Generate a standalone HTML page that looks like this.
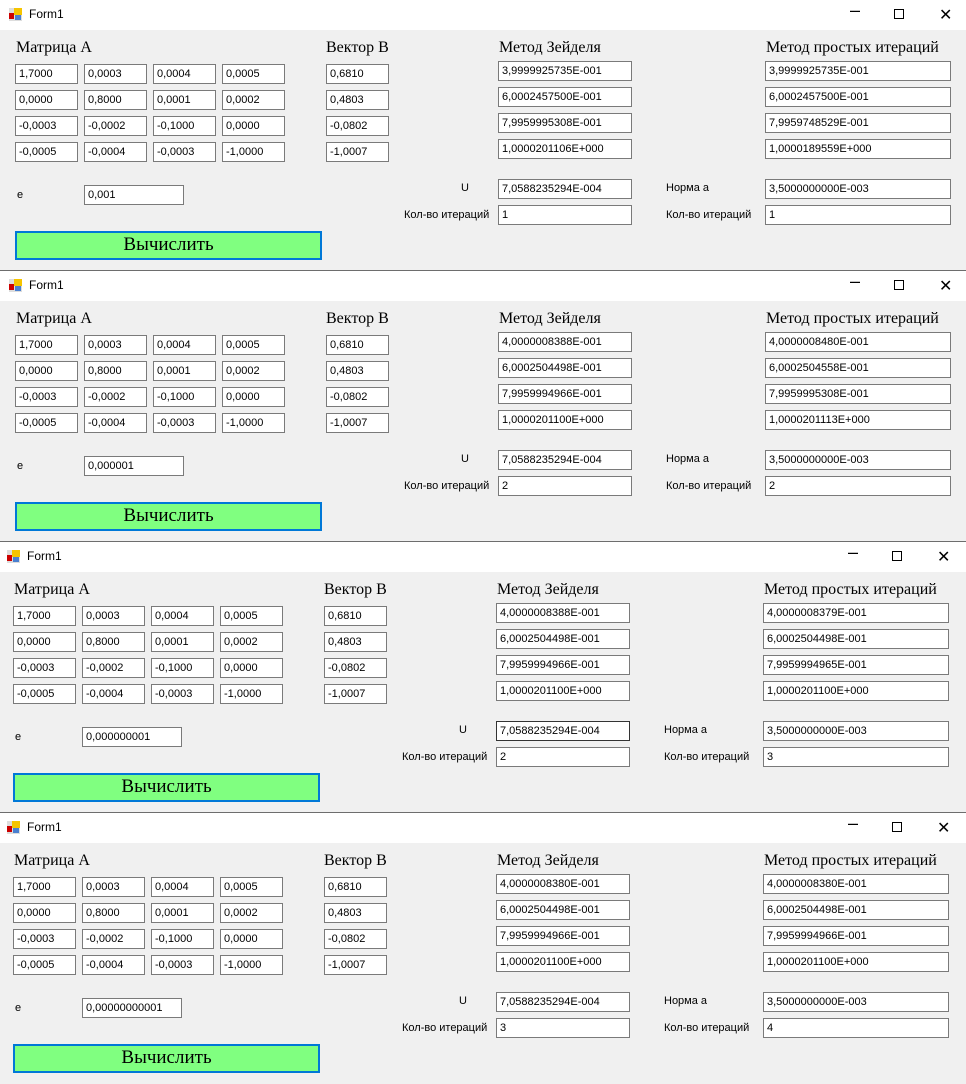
<!DOCTYPE html>
<html><head><meta charset="utf-8"><style>
*{margin:0;padding:0;box-sizing:border-box}
body{width:966px;height:1078px;overflow:hidden;background:#f0f0f0;position:relative;font-family:"Liberation Sans",sans-serif}
.p{position:absolute;left:0;width:970px;height:271px;background:#f0f0f0;border-bottom:1px solid #6d6d6d;overflow:hidden}
.tb{position:absolute;left:0;top:0;width:100%;height:30px;background:#fff}
.ft{position:absolute;left:29px;top:7px;font-size:12px;color:#000}
.ic{position:absolute;left:9px;top:8px;width:13px;height:13px}
.ctl{position:absolute;top:6px;font-size:14px;color:#000}
.l{position:absolute;font-family:"Liberation Serif",serif;font-size:16px;color:#000}
.s{position:absolute;font-size:11px;color:#000}
.t{position:absolute;height:20px;border:1px solid #7a7a7a;background:#fff;font-size:11px;line-height:18px;padding-left:3px;color:#000;white-space:nowrap}
.m{width:63px}.w{width:134px}.x{width:186px}
.b{position:absolute;left:15px;top:231px;width:307px;height:29px;border:2px solid #0078d7;background:#80ff80;font-family:"Liberation Serif",serif;font-size:19px;text-align:center;line-height:24px}
</style></head><body>

<!-- PANEL 1 -->
<div class="p" style="top:0;left:0">
<div class="tb"><svg class="ic" viewBox="0 0 13 13"><rect x="0" y="0" width="13" height="13" fill="#ddd"/><rect x="5" y="0" width="8" height="7" fill="#f5c400"/><rect x="0" y="5" width="5" height="6" fill="#c00"/><rect x="6" y="7" width="6" height="5" fill="#4a80d0"/></svg><div class="ft">Form1</div>
<div class="ctl" style="left:850px;top:0;font-size:18px">–</div><div style="position:absolute;left:894px;top:9px;width:10px;height:10px;border:1px solid #000"></div><div class="ctl" style="left:939px;top:5px;font-size:16px">✕</div></div>
<div class="l" style="left:16px;top:39px">Матрица А</div><div class="l" style="left:326px;top:39px">Вектор В</div><div class="l" style="left:499px;top:39px">Метод Зейделя</div><div class="l" style="left:766px;top:39px">Метод простых итераций</div>
<div class="t m" style="left:15px;top:64px">1,7000</div><div class="t m" style="left:84px;top:64px">0,0003</div><div class="t m" style="left:153px;top:64px">0,0004</div><div class="t m" style="left:222px;top:64px">0,0005</div><div class="t m" style="left:326px;top:64px">0,6810</div>
<div class="t m" style="left:15px;top:90px">0,0000</div><div class="t m" style="left:84px;top:90px">0,8000</div><div class="t m" style="left:153px;top:90px">0,0001</div><div class="t m" style="left:222px;top:90px">0,0002</div><div class="t m" style="left:326px;top:90px">0,4803</div>
<div class="t m" style="left:15px;top:116px">-0,0003</div><div class="t m" style="left:84px;top:116px">-0,0002</div><div class="t m" style="left:153px;top:116px">-0,1000</div><div class="t m" style="left:222px;top:116px">0,0000</div><div class="t m" style="left:326px;top:116px">-0,0802</div>
<div class="t m" style="left:15px;top:142px">-0,0005</div><div class="t m" style="left:84px;top:142px">-0,0004</div><div class="t m" style="left:153px;top:142px">-0,0003</div><div class="t m" style="left:222px;top:142px">-1,0000</div><div class="t m" style="left:326px;top:142px">-1,0007</div>
<div class="t w" style="left:498px;top:61px">3,9999925735E-001</div><div class="t w" style="left:498px;top:87px">6,0002457500E-001</div><div class="t w" style="left:498px;top:113px">7,9959995308E-001</div><div class="t w" style="left:498px;top:139px">1,0000201106E+000</div>
<div class="t x" style="left:765px;top:61px">3,9999925735E-001</div><div class="t x" style="left:765px;top:87px">6,0002457500E-001</div><div class="t x" style="left:765px;top:113px">7,9959748529E-001</div><div class="t x" style="left:765px;top:139px">1,0000189559E+000</div>
<div class="s" style="left:17px;top:189px">e</div><div class="t" style="left:84px;top:185px;width:100px">0,001</div>
<div class="s" style="left:461px;top:182px">U</div><div class="t w" style="left:498px;top:179px">7,0588235294E-004</div>
<div class="s" style="left:404px;top:209px">Кол-во итераций</div><div class="t w" style="left:498px;top:205px">1</div>
<div class="s" style="left:666px;top:182px">Норма а</div><div class="t x" style="left:765px;top:179px">3,5000000000E-003</div>
<div class="s" style="left:666px;top:209px">Кол-во итераций</div><div class="t x" style="left:765px;top:205px">1</div>
<div class="b">Вычислить</div>
</div>

<!-- PANEL 2 -->
<div class="p" style="top:271px;left:0">
<div class="tb"><svg class="ic" viewBox="0 0 13 13"><rect x="0" y="0" width="13" height="13" fill="#ddd"/><rect x="5" y="0" width="8" height="7" fill="#f5c400"/><rect x="0" y="5" width="5" height="6" fill="#c00"/><rect x="6" y="7" width="6" height="5" fill="#4a80d0"/></svg><div class="ft">Form1</div>
<div class="ctl" style="left:850px;top:0;font-size:18px">–</div><div style="position:absolute;left:894px;top:9px;width:10px;height:10px;border:1px solid #000"></div><div class="ctl" style="left:939px;top:5px;font-size:16px">✕</div></div>
<div class="l" style="left:16px;top:39px">Матрица А</div><div class="l" style="left:326px;top:39px">Вектор В</div><div class="l" style="left:499px;top:39px">Метод Зейделя</div><div class="l" style="left:766px;top:39px">Метод простых итераций</div>
<div class="t m" style="left:15px;top:64px">1,7000</div><div class="t m" style="left:84px;top:64px">0,0003</div><div class="t m" style="left:153px;top:64px">0,0004</div><div class="t m" style="left:222px;top:64px">0,0005</div><div class="t m" style="left:326px;top:64px">0,6810</div>
<div class="t m" style="left:15px;top:90px">0,0000</div><div class="t m" style="left:84px;top:90px">0,8000</div><div class="t m" style="left:153px;top:90px">0,0001</div><div class="t m" style="left:222px;top:90px">0,0002</div><div class="t m" style="left:326px;top:90px">0,4803</div>
<div class="t m" style="left:15px;top:116px">-0,0003</div><div class="t m" style="left:84px;top:116px">-0,0002</div><div class="t m" style="left:153px;top:116px">-0,1000</div><div class="t m" style="left:222px;top:116px">0,0000</div><div class="t m" style="left:326px;top:116px">-0,0802</div>
<div class="t m" style="left:15px;top:142px">-0,0005</div><div class="t m" style="left:84px;top:142px">-0,0004</div><div class="t m" style="left:153px;top:142px">-0,0003</div><div class="t m" style="left:222px;top:142px">-1,0000</div><div class="t m" style="left:326px;top:142px">-1,0007</div>
<div class="t w" style="left:498px;top:61px">4,0000008388E-001</div><div class="t w" style="left:498px;top:87px">6,0002504498E-001</div><div class="t w" style="left:498px;top:113px">7,9959994966E-001</div><div class="t w" style="left:498px;top:139px">1,0000201100E+000</div>
<div class="t x" style="left:765px;top:61px">4,0000008480E-001</div><div class="t x" style="left:765px;top:87px">6,0002504558E-001</div><div class="t x" style="left:765px;top:113px">7,9959995308E-001</div><div class="t x" style="left:765px;top:139px">1,0000201113E+000</div>
<div class="s" style="left:17px;top:189px">e</div><div class="t" style="left:84px;top:185px;width:100px">0,000001</div>
<div class="s" style="left:461px;top:182px">U</div><div class="t w" style="left:498px;top:179px">7,0588235294E-004</div>
<div class="s" style="left:404px;top:209px">Кол-во итераций</div><div class="t w" style="left:498px;top:205px">2</div>
<div class="s" style="left:666px;top:182px">Норма а</div><div class="t x" style="left:765px;top:179px">3,5000000000E-003</div>
<div class="s" style="left:666px;top:209px">Кол-во итераций</div><div class="t x" style="left:765px;top:205px">2</div>
<div class="b">Вычислить</div>
</div>

<!-- PANEL 3 -->
<div class="p" style="top:542px;left:-2px">
<div class="tb"><svg class="ic" viewBox="0 0 13 13"><rect x="0" y="0" width="13" height="13" fill="#ddd"/><rect x="5" y="0" width="8" height="7" fill="#f5c400"/><rect x="0" y="5" width="5" height="6" fill="#c00"/><rect x="6" y="7" width="6" height="5" fill="#4a80d0"/></svg><div class="ft">Form1</div>
<div class="ctl" style="left:850px;top:0;font-size:18px">–</div><div style="position:absolute;left:894px;top:9px;width:10px;height:10px;border:1px solid #000"></div><div class="ctl" style="left:939px;top:5px;font-size:16px">✕</div></div>
<div class="l" style="left:16px;top:39px">Матрица А</div><div class="l" style="left:326px;top:39px">Вектор В</div><div class="l" style="left:499px;top:39px">Метод Зейделя</div><div class="l" style="left:766px;top:39px">Метод простых итераций</div>
<div class="t m" style="left:15px;top:64px">1,7000</div><div class="t m" style="left:84px;top:64px">0,0003</div><div class="t m" style="left:153px;top:64px">0,0004</div><div class="t m" style="left:222px;top:64px">0,0005</div><div class="t m" style="left:326px;top:64px">0,6810</div>
<div class="t m" style="left:15px;top:90px">0,0000</div><div class="t m" style="left:84px;top:90px">0,8000</div><div class="t m" style="left:153px;top:90px">0,0001</div><div class="t m" style="left:222px;top:90px">0,0002</div><div class="t m" style="left:326px;top:90px">0,4803</div>
<div class="t m" style="left:15px;top:116px">-0,0003</div><div class="t m" style="left:84px;top:116px">-0,0002</div><div class="t m" style="left:153px;top:116px">-0,1000</div><div class="t m" style="left:222px;top:116px">0,0000</div><div class="t m" style="left:326px;top:116px">-0,0802</div>
<div class="t m" style="left:15px;top:142px">-0,0005</div><div class="t m" style="left:84px;top:142px">-0,0004</div><div class="t m" style="left:153px;top:142px">-0,0003</div><div class="t m" style="left:222px;top:142px">-1,0000</div><div class="t m" style="left:326px;top:142px">-1,0007</div>
<div class="t w" style="left:498px;top:61px">4,0000008388E-001</div><div class="t w" style="left:498px;top:87px">6,0002504498E-001</div><div class="t w" style="left:498px;top:113px">7,9959994966E-001</div><div class="t w" style="left:498px;top:139px">1,0000201100E+000</div>
<div class="t x" style="left:765px;top:61px">4,0000008379E-001</div><div class="t x" style="left:765px;top:87px">6,0002504498E-001</div><div class="t x" style="left:765px;top:113px">7,9959994965E-001</div><div class="t x" style="left:765px;top:139px">1,0000201100E+000</div>
<div class="s" style="left:17px;top:189px">e</div><div class="t" style="left:84px;top:185px;width:100px">0,000000001</div>
<div class="s" style="left:461px;top:182px">U</div><div class="t w" style="left:498px;top:179px;border-color:#333">7,0588235294E-004</div>
<div class="s" style="left:404px;top:209px">Кол-во итераций</div><div class="t w" style="left:498px;top:205px">2</div>
<div class="s" style="left:666px;top:182px">Норма а</div><div class="t x" style="left:765px;top:179px">3,5000000000E-003</div>
<div class="s" style="left:666px;top:209px">Кол-во итераций</div><div class="t x" style="left:765px;top:205px">3</div>
<div class="b">Вычислить</div>
</div>

<!-- PANEL 4 -->
<div class="p" style="top:813px;left:-2px;border-bottom:none">
<div class="tb"><svg class="ic" viewBox="0 0 13 13"><rect x="0" y="0" width="13" height="13" fill="#ddd"/><rect x="5" y="0" width="8" height="7" fill="#f5c400"/><rect x="0" y="5" width="5" height="6" fill="#c00"/><rect x="6" y="7" width="6" height="5" fill="#4a80d0"/></svg><div class="ft">Form1</div>
<div class="ctl" style="left:850px;top:0;font-size:18px">–</div><div style="position:absolute;left:894px;top:9px;width:10px;height:10px;border:1px solid #000"></div><div class="ctl" style="left:939px;top:5px;font-size:16px">✕</div></div>
<div class="l" style="left:16px;top:39px">Матрица А</div><div class="l" style="left:326px;top:39px">Вектор В</div><div class="l" style="left:499px;top:39px">Метод Зейделя</div><div class="l" style="left:766px;top:39px">Метод простых итераций</div>
<div class="t m" style="left:15px;top:64px">1,7000</div><div class="t m" style="left:84px;top:64px">0,0003</div><div class="t m" style="left:153px;top:64px">0,0004</div><div class="t m" style="left:222px;top:64px">0,0005</div><div class="t m" style="left:326px;top:64px">0,6810</div>
<div class="t m" style="left:15px;top:90px">0,0000</div><div class="t m" style="left:84px;top:90px">0,8000</div><div class="t m" style="left:153px;top:90px">0,0001</div><div class="t m" style="left:222px;top:90px">0,0002</div><div class="t m" style="left:326px;top:90px">0,4803</div>
<div class="t m" style="left:15px;top:116px">-0,0003</div><div class="t m" style="left:84px;top:116px">-0,0002</div><div class="t m" style="left:153px;top:116px">-0,1000</div><div class="t m" style="left:222px;top:116px">0,0000</div><div class="t m" style="left:326px;top:116px">-0,0802</div>
<div class="t m" style="left:15px;top:142px">-0,0005</div><div class="t m" style="left:84px;top:142px">-0,0004</div><div class="t m" style="left:153px;top:142px">-0,0003</div><div class="t m" style="left:222px;top:142px">-1,0000</div><div class="t m" style="left:326px;top:142px">-1,0007</div>
<div class="t w" style="left:498px;top:61px">4,0000008380E-001</div><div class="t w" style="left:498px;top:87px">6,0002504498E-001</div><div class="t w" style="left:498px;top:113px">7,9959994966E-001</div><div class="t w" style="left:498px;top:139px">1,0000201100E+000</div>
<div class="t x" style="left:765px;top:61px">4,0000008380E-001</div><div class="t x" style="left:765px;top:87px">6,0002504498E-001</div><div class="t x" style="left:765px;top:113px">7,9959994966E-001</div><div class="t x" style="left:765px;top:139px">1,0000201100E+000</div>
<div class="s" style="left:17px;top:189px">e</div><div class="t" style="left:84px;top:185px;width:100px">0,00000000001</div>
<div class="s" style="left:461px;top:182px">U</div><div class="t w" style="left:498px;top:179px">7,0588235294E-004</div>
<div class="s" style="left:404px;top:209px">Кол-во итераций</div><div class="t w" style="left:498px;top:205px">3</div>
<div class="s" style="left:666px;top:182px">Норма а</div><div class="t x" style="left:765px;top:179px">3,5000000000E-003</div>
<div class="s" style="left:666px;top:209px">Кол-во итераций</div><div class="t x" style="left:765px;top:205px">4</div>
<div class="b">Вычислить</div>
</div>

</body></html>
